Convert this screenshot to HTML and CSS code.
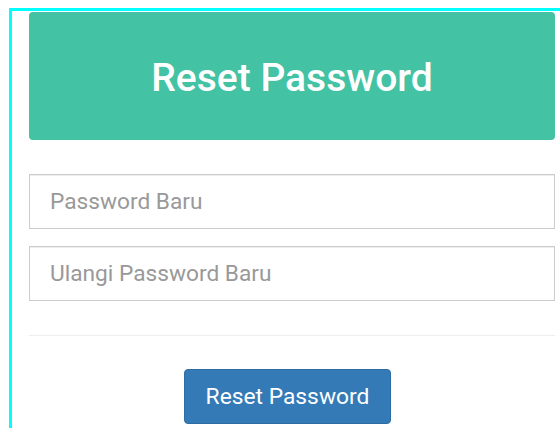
FILE: index.html
```html
<!DOCTYPE html>
<html lang="id">
<head>
<meta charset="utf-8">
<title>Reset Password</title>
<link rel="stylesheet" href="styles.css">
</head>
<body>
<div class="frame">
  <div class="banner">
    <h1 class="banner-title">Reset Password</h1>
  </div>
  <form class="reset-form">
    <input class="field" type="password" placeholder="Password Baru">
    <input class="field" type="password" placeholder="Ulangi Password Baru">
    <hr class="divider">
    <div class="actions">
      <button class="btn-primary" type="button">Reset Password</button>
    </div>
  </form>
</div>
</body>
</html>
```
FILE: styles.css
```css
* {
  box-sizing: border-box;
}

html, body {
  margin: 0;
  background: #fff;
  font-family: Roboto, "Liberation Sans", sans-serif;
}

.frame {
  margin: 8px 0 0 9px;
  border-top: 3px solid #00ffff;
  border-left: 3px solid #00ffff;
  padding: 1px 5px 0 17px;
  min-height: 420px;
}

.banner {
  height: 128px;
  background: #43c3a4;
  border-radius: 4px;
  display: flex;
  align-items: center;
  justify-content: center;
  padding-top: 3px;
}

.banner-title {
  margin: 0;
  color: #fff;
  font-size: 39px;
  font-weight: 500;
}

.reset-form {
  display: flex;
  flex-direction: column;
  padding-top: 34px;
}

.field {
  height: 55px;
  border: 1px solid #ccc;
  border-radius: 0;
  padding: 0 20px;
  font-family: inherit;
  font-size: 22.7px;
  color: #555;
  box-shadow: inset 0 1px 1px rgba(0, 0, 0, 0.075);
  outline: none;
}

.field + .field {
  margin-top: 17px;
}

.field::placeholder {
  color: #999;
}

.divider {
  margin: 34px 0 0;
  border: 0;
  border-top: 1px solid #eee;
}

.actions {
  display: flex;
  justify-content: center;
  padding: 33px 9px 0 0;
}

.btn-primary {
  width: 207px;
  height: 55px;
  background: #337ab7;
  border: 1px solid #2e6da4;
  border-radius: 4px;
  color: #fff;
  font-family: inherit;
  font-size: 22.8px;
}
```
